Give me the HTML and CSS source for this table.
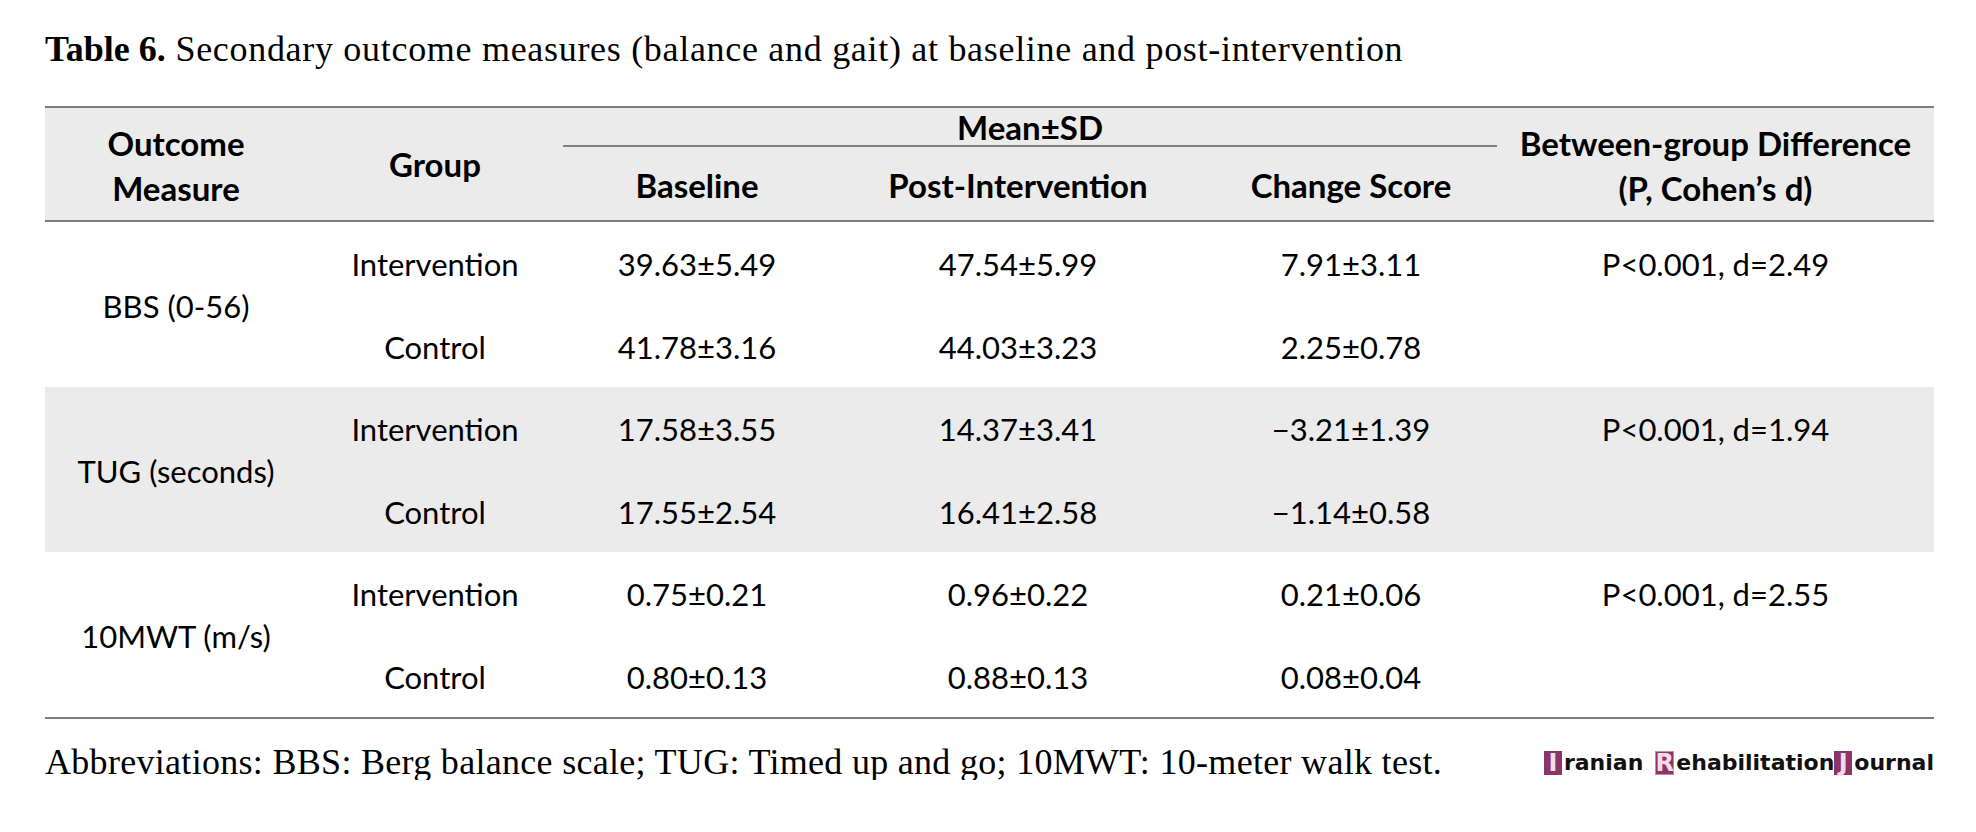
FILE: index.html
```html
<!DOCTYPE html>
<html lang="en">
<head>
<meta charset="utf-8">
<title>Table 6</title>
<link rel="stylesheet" href="styles.css">
</head>
<body>
<div class="page">
  <p class="caption"><b>Table 6.</b> Secondary outcome measures (balance and gait) at baseline and post-intervention</p>

  <div class="table">
    <div class="thead">
      <div class="th c-measure">Outcome<br>Measure</div>
      <div class="th c-group">Group</div>
      <div class="th c-mean">Mean±SD</div>
      <div class="th c-diff">Between-group Difference<br>(P, Cohen’s d)</div>
      <div class="th c-base">Baseline</div>
      <div class="th c-post">Post-Intervention</div>
      <div class="th c-change">Change Score</div>
    </div>

    <div class="tgroup">
      <div class="td measure">BBS (0-56)</div>
      <div class="td">Intervention</div>
      <div class="td">39.63±5.49</div>
      <div class="td">47.54±5.99</div>
      <div class="td">7.91±3.11</div>
      <div class="td">P&lt;0.001, d=2.49</div>
      <div class="td">Control</div>
      <div class="td">41.78±3.16</div>
      <div class="td">44.03±3.23</div>
      <div class="td">2.25±0.78</div>
      <div class="td"></div>
    </div>

    <div class="tgroup band">
      <div class="td measure">TUG (seconds)</div>
      <div class="td">Intervention</div>
      <div class="td">17.58±3.55</div>
      <div class="td">14.37±3.41</div>
      <div class="td">−3.21±1.39</div>
      <div class="td">P&lt;0.001, d=1.94</div>
      <div class="td">Control</div>
      <div class="td">17.55±2.54</div>
      <div class="td">16.41±2.58</div>
      <div class="td">−1.14±0.58</div>
      <div class="td"></div>
    </div>

    <div class="tgroup">
      <div class="td measure">10MWT (m/s)</div>
      <div class="td">Intervention</div>
      <div class="td">0.75±0.21</div>
      <div class="td">0.96±0.22</div>
      <div class="td">0.21±0.06</div>
      <div class="td">P&lt;0.001, d=2.55</div>
      <div class="td">Control</div>
      <div class="td">0.80±0.13</div>
      <div class="td">0.88±0.13</div>
      <div class="td">0.08±0.04</div>
      <div class="td"></div>
    </div>
  </div>

  <div class="footer">
    <p class="abbr">Abbreviations: BBS: Berg balance scale; TUG: Timed up and go; 10MWT: 10-meter walk test.</p>
    <div class="logo"><span class="box">I</span><span class="word">ranian</span><span class="box box-r">R</span><span class="word">ehabilitation</span><span class="box">J</span><span class="word">ournal</span></div>
  </div>
</div>
</body>
</html>
```

FILE: styles.css
```css
html, body {
  margin: 0;
  padding: 0;
  background: #ffffff;
}

.page {
  width: 1889px;
  margin-left: 45px;
  color: #000;
}

.caption {
  margin: 31px 0 0 0;
  font-family: "Liberation Serif", "Times New Roman", serif;
  font-size: 36px;
  letter-spacing: 0.7px;
  line-height: 36px;
  height: 36px;
  white-space: nowrap;
}

.caption b {
  font-weight: 700;
  letter-spacing: 0;
}

.table {
  margin-top: 39px;
  font-family: "Lato", "Open Sans", sans-serif;
  font-size: 31px;
  border-bottom: 2px solid #7d7d7d;
}

.thead {
  display: grid;
  grid-template-columns: 262px 256px 268px 374px 292px 437px;
  grid-template-rows: 39px 73px;
  background: #ebebeb;
  border-top: 2px solid #7d7d7d;
  border-bottom: 2px solid #7d7d7d;
}

.th {
  font-weight: 700;
  font-size: 33px;
  display: flex;
  align-items: center;
  justify-content: center;
  text-align: center;
  line-height: 45px;
  white-space: nowrap;
}

.c-measure { grid-column: 1; grid-row: 1 / 3; padding-top: 4px; }
.c-group { grid-column: 2; grid-row: 1 / 3; }
.c-mean {
  grid-column: 3 / 6;
  grid-row: 1;
  border-bottom: 2px solid #808080;
  box-sizing: border-box;
  padding-top: 2px;
}
.c-diff { grid-column: 6; grid-row: 1 / 3; padding-top: 4px; }
.c-base { grid-column: 3; grid-row: 2; padding-top: 4px; }
.c-post { grid-column: 4; grid-row: 2; padding-top: 4px; }
.c-change { grid-column: 5; grid-row: 2; padding-top: 4px; }

.tgroup {
  display: grid;
  grid-template-columns: 262px 256px 268px 374px 292px 437px;
  grid-template-rows: 82px 83px;
  height: 165px;
}

.tgroup.band {
  background: #ebebeb;
}

.td {
  display: flex;
  align-items: center;
  justify-content: center;
  text-align: center;
  white-space: nowrap;
  padding-top: 2px;
}

.td.measure {
  grid-row: 1 / 3;
}

.footer {
  margin-top: 25px;
  display: flex;
  justify-content: space-between;
  align-items: center;
}

.abbr {
  margin: 0;
  font-family: "Liberation Serif", "Times New Roman", serif;
  font-size: 36px;
  letter-spacing: 0.3px;
  line-height: 36px;
  white-space: nowrap;
}

.logo {
  display: flex;
  align-items: center;
  font-family: "DejaVu Sans", Verdana, sans-serif;
  font-weight: 700;
  font-size: 22px;
  line-height: 24px;
  margin-top: 2px;
}

.logo .box {
  display: inline-block;
  width: 18px;
  height: 24px;
  background: #8c3566;
  color: #f4dbe8;
  text-align: center;
  font-size: 24px;
  line-height: 25px;
  margin-right: 2px;
}

.logo .box-r {
  margin-left: 12px;
  width: 19px;
  box-shadow: inset 0 0 0 1px #c58aa8;
}

.logo .word {
  color: #111;
}
```
